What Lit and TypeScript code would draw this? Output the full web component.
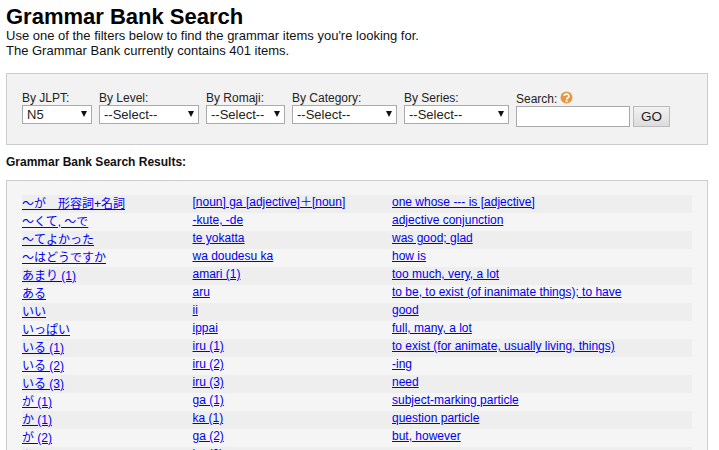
import { LitElement, html, css } from "lit";
import { customElement } from "lit/decorators.js";

const filters = [
  { label: "By JLPT:", value: "N5", width: 70 },
  { label: "By Level:", value: "--Select--", width: 100 },
  { label: "By Romaji:", value: "--Select--", width: 79 },
  { label: "By Category:", value: "--Select--", width: 105 },
  { label: "By Series:", value: "--Select--", width: 105 },
];

const rows: [string, string, string][] = [
  ["〜が　形容詞+名詞", "[noun] ga [adjective]＋[noun]", "one whose --- is [adjective]"],
  ["〜くて, 〜で", "-kute, -de", "adjective conjunction"],
  ["〜てよかった", "te yokatta", "was good; glad"],
  ["〜はどうですか", "wa doudesu ka", "how is"],
  ["あまり (1)", "amari (1)", "too much, very, a lot"],
  ["ある", "aru", "to be, to exist (of inanimate things); to have"],
  ["いい", "ii", "good"],
  ["いっぱい", "ippai", "full, many, a lot"],
  ["いる (1)", "iru (1)", "to exist (for animate, usually living, things)"],
  ["いる (2)", "iru (2)", "-ing"],
  ["いる (3)", "iru (3)", "need"],
  ["が (1)", "ga (1)", "subject-marking particle"],
  ["か (1)", "ka (1)", "question particle"],
  ["が (2)", "ga (2)", "but, however"],
  ["か (2)", "ka (2)", "or"],
];

@customElement("app-root")
export class AppRoot extends LitElement {
  static styles = css`
    :host {
      display: block;
      height: 450px;
      overflow: hidden;
      box-sizing: border-box;
      padding: 6px 11px 0 6px;
      background: #fff;
      color: #000;
      font-family: "Liberation Sans", Arial, "Noto Sans CJK JP", sans-serif;
      font-size: 12px;
    }
    h1 {
      margin: 0;
      font-size: 22px;
      line-height: 22px;
      font-weight: 700;
    }
    .intro {
      margin: 0;
      font-size: 13px;
      line-height: 15px;
      color: #111;
    }
    .panel {
      box-sizing: border-box;
      height: 72px;
      margin-top: 15px;
      border: 1px solid #ccc;
      background: #f2f2f2;
      padding: 17px 15px 0;
      display: flex;
      gap: 7px;
    }
    .field {
      display: flex;
      flex-direction: column;
    }
    .field label {
      height: 14px;
      line-height: 14px;
      color: #222;
    }
    .select-wrap {
      position: relative;
      height: 19px;
    }
    select {
      appearance: none;
      box-sizing: border-box;
      display: block;
      width: 100%;
      height: 19px;
      margin: 0;
      padding: 0 0 0 4px;
      border: 1px solid #aaa;
      border-radius: 0;
      background: #fff;
      color: #222;
      font: 13px "Liberation Sans", Arial, sans-serif;
    }
    .select-wrap::after {
      content: "";
      position: absolute;
      right: 5px;
      top: 6px;
      border-left: 3.5px solid transparent;
      border-right: 3.5px solid transparent;
      border-top: 6px solid #111;
      pointer-events: none;
    }
    .search-label {
      display: flex;
      align-items: flex-start;
      gap: 3px;
      height: 15px;
      line-height: 16px;
      color: #222;
    }
    .search-label svg {
      display: block;
    }
    .search-row {
      display: flex;
      gap: 3px;
    }
    input {
      box-sizing: border-box;
      width: 114px;
      height: 21px;
      margin: 0;
      border: 1px solid #aaa;
      background: #fff;
    }
    button {
      box-sizing: border-box;
      width: 37px;
      height: 21px;
      margin: 0;
      padding: 0;
      border: 1px solid #bbb;
      background: linear-gradient(#f2f2f2, #dcdcdc);
      color: #222;
      font: 13.5px "Liberation Sans", Arial, sans-serif;
    }
    h2 {
      margin: 10px 0 11px;
      font-size: 12px;
      line-height: 14px;
      font-weight: 700;
      color: #111;
    }
    .results {
      box-sizing: border-box;
      border: 1px solid #ccc;
      background: #f5f5f5;
      padding: 14px 15px 14px;
    }
    .row {
      display: grid;
      grid-template-columns: 170.5px 199.5px 1fr;
      height: 18px;
      line-height: 14px;
    }
    .row:nth-child(odd) {
      background: #eeeeee;
    }
    .row a {
      color: #0000ee;
      text-decoration: underline;
      justify-self: start;
    }
    .row a:first-child {
      line-height: 18px;
    }
  `;

  render() {
    return html`
      <h1>Grammar Bank Search</h1>
      <p class="intro">
        Use one of the filters below to find the grammar items you're looking for.<br />
        The Grammar Bank currently contains 401 items.
      </p>
      <div class="panel">
        ${filters.map(
          (f) => html`
            <div class="field" style="width:${f.width}px">
              <label>${f.label}</label>
              <div class="select-wrap">
                <select><option>${f.value}</option></select>
              </div>
            </div>
          `
        )}
        <div class="field">
          <div class="search-label">
            Search:
            <svg width="13" height="13" viewBox="0 0 13 13" aria-hidden="true">
              <circle cx="6.5" cy="6.5" r="6" fill="#e8983c" />
              <path d="M4.2 5a2.3 2.2 0 1 1 3.4 2c-.8.4-1 .7-1 1.4" fill="none" stroke="#fff" stroke-width="1.7" />
              <rect x="5.7" y="9.3" width="1.8" height="1.8" fill="#fff" />
            </svg>
          </div>
          <div class="search-row">
            <input type="text" />
            <button>GO</button>
          </div>
        </div>
      </div>
      <h2>Grammar Bank Search Results:</h2>
      <div class="results">
        ${rows.map(
          ([jp, romaji, en]) => html`
            <div class="row">
              <a href="#">${jp}</a>
              <a href="#">${romaji}</a>
              <a href="#">${en}</a>
            </div>
          `
        )}
      </div>
    `;
  }
}
